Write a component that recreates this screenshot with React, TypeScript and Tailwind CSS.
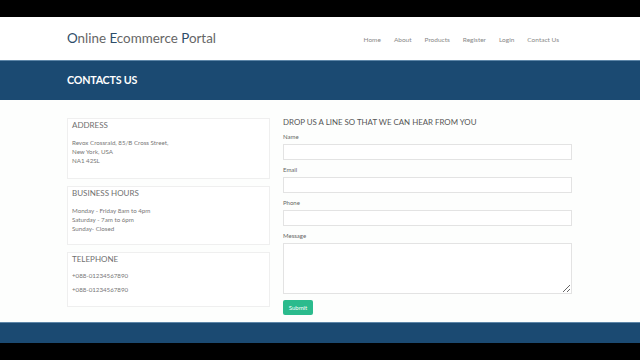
const navLinks = ["Home", "About", "Products", "Register", "Login", "Contact Us"];

const infoCards = [
  {
    title: "ADDRESS",
    lines: ["Revox Crossraid, 85/B Cross Street,", "New York, USA", "NA1 42SL"],
    gap: false,
    h: "h-[61px]",
  },
  {
    title: "BUSINESS HOURS",
    lines: ["Monday - Friday 8am to 4pm", "Saturday - 7am to 6pm", "Sunday- Closed"],
    gap: false,
    h: "h-[59px]",
  },
  {
    title: "TELEPHONE",
    lines: ["+088-01234567890", "+088-01234567890"],
    gap: true,
    h: "h-[55px]",
  },
];

const fields = ["Name", "Email", "Phone"];

function InfoCard({ title, lines, gap, h }: { title: string; lines: string[]; gap: boolean; h: string }) {
  return (
    <div className={`${h} border border-[#efefef] bg-white px-[4px] pt-0`}>
      <h3 className="text-[8px] leading-[12px] text-[#707070]">{title}</h3>
      <div className={gap ? "mt-[6px] flex flex-col gap-[5px]" : "mt-[7px] flex flex-col"}>
        {lines.map((l, i) => (
          <p key={i} className="text-[6.2px] leading-[9px] text-[#777]">
            {l}
          </p>
        ))}
      </div>
    </div>
  );
}

export default function App() {
  return (
    <div className="w-[640px] h-[360px] bg-black flex flex-col overflow-hidden font-['Lato','Open_Sans',sans-serif]">
      <div className="h-[17px] shrink-0" />

      <header className="h-[43px] shrink-0 bg-white flex items-center justify-between pl-[67px] pr-[81px]">
        <h1 className="text-[13.4px] leading-none text-[#666] pt-[1px]">
          <span className="text-[#2d4d6a]">O</span>nline <span className="text-[#2d4d6a]">E</span>commerce{" "}
          <span className="text-[#2d4d6a]">P</span>ortal
        </h1>
        <nav className="flex gap-[13px] pt-[3px]">
          {navLinks.map((n) => (
            <a key={n} className="text-[6.5px] text-[#888]">
              {n}
            </a>
          ))}
        </nav>
      </header>

      <div className="h-[40px] shrink-0 bg-[#1b4a72] flex items-center pl-[67px] border-t border-[#5d86a8]">
        <h2 className="text-[10.7px] font-bold text-white tracking-[-0.2px]">CONTACTS US</h2>
      </div>

      <main className="h-[222px] shrink-0 bg-[#fdfefd] flex gap-[13px] pl-[67px] pt-[18px]">
        <div className="w-[203px] flex flex-col gap-[7px]">
          {infoCards.map((c) => (
            <InfoCard key={c.title} {...c} />
          ))}
        </div>

        <form className="w-[289px] flex flex-col">
          <h3 className="text-[7.9px] leading-[12px] text-[#555] mt-[-2px]">DROP US A LINE SO THAT WE CAN HEAR FROM YOU</h3>
          {fields.map((f, i) => (
            <div key={f} className={i === 0 ? "mt-[5px] flex flex-col" : "mt-[6px] flex flex-col"}>
              <label className="text-[6px] leading-[8px] text-[#666]">{f}</label>
              <input className="mt-[3px] h-[16px] w-full border border-[#e3e3e3] bg-white" />
            </div>
          ))}
          <div className="mt-[6px] flex flex-col">
            <label className="text-[6px] leading-[8px] text-[#666]">Message</label>
            <textarea className="block mt-[3px] h-[51px] w-full border border-[#e3e3e3] bg-white resize" />
          </div>
          <div className="mt-[6px] flex">
            <button
              type="button"
              className="h-[15px] w-[30px] rounded-[2px] bg-[#2bbb8d] text-[6px] text-white"
            >
              Submit
            </button>
          </div>
        </form>
      </main>

      <footer className="h-[21px] shrink-0 bg-[#1b4a72] border-t border-[#5d86a8]" />
      <div className="flex-1" />
    </div>
  );
}
